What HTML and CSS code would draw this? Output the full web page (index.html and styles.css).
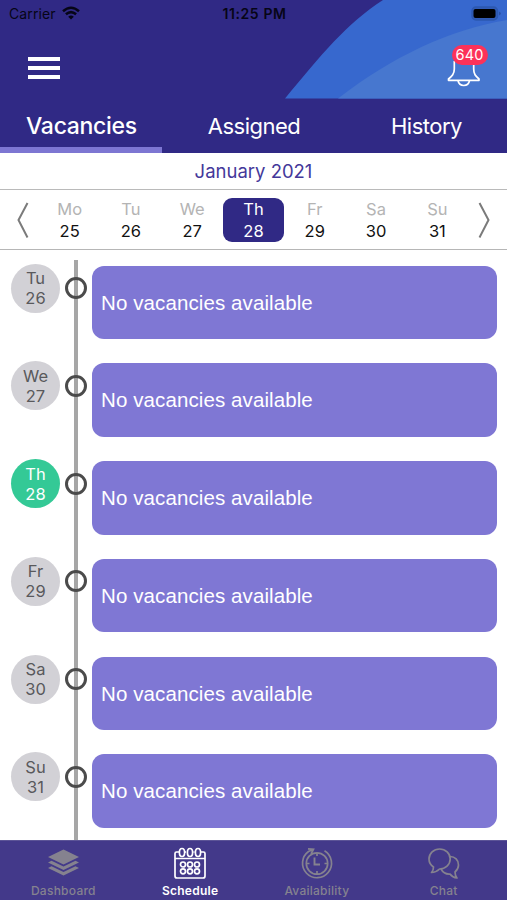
FILE: index.html
```html
<!DOCTYPE html>
<html lang="en">
<head>
<meta charset="utf-8">
<title>Schedule</title>
<link rel="stylesheet" href="styles.css">
</head>
<body>
<div class="app">
  <header class="header">
    <svg class="swoosh" width="222" height="99" viewBox="0 0 222 99" aria-hidden="true">
      <path d="M0 98.500C37 54 61 24 98 0H222V98.500Z" fill="#3768ce"/>
      <path d="M53 98.500C108 56 164 30 222 20V98.500Z" fill="#4777cf"/>
    </svg>
    <div class="status">
      <div class="carrier"><span>Carrier</span>
        <svg width="18" height="14" viewBox="0 0 18 14" fill="none" stroke="#060516" stroke-width="2.500"><path d="M1 5.200Q9-1.800 17 5.200M3.900 8.300Q9 3.900 14.100 8.300"/><path d="M6.200 10.700Q9 8.400 11.800 10.700L9 13.500Z" fill="#060516" stroke="none"/></svg>
      </div>
      <span class="time">11:25 PM</span>
      <svg class="battery" width="31" height="15" viewBox="0 0 31 15"><rect x="1" y="1" width="25.500" height="13" rx="4" fill="#315bb5" stroke="#2c58b0" stroke-width="1.500"/><rect x="2.500" y="3" width="22" height="9" rx="2" fill="#000"/><path d="M28.300 5.500Q31 7.500 28.300 9.500Z" fill="#244894"/></svg>
    </div>
    <div class="actions">
      <div class="menu"><i></i><i></i><i></i></div>
      <div class="bell">
        <svg width="34" height="40" viewBox="0 0 34 40" fill="none" stroke="#fff" stroke-width="1.700" stroke-linejoin="round"><path d="M7.300 14V22C7.300 27 5 29 1.500 32V33.300H32V32C28.500 29 26.700 27 26.700 22V14"/><path d="M11 33.500Q12 38.500 16.800 38.500T22.500 33.500"/></svg>
        <span class="badge">640</span>
      </div>
    </div>
  </header>
  <nav class="tabs">
    <div class="tab active"><span>Vacancies</span></div>
    <div class="tab"><span>Assigned</span></div>
    <div class="tab"><span>History</span></div>
  </nav>
  <div class="month"><span>January 2021</span></div>
  <div class="week">
    <svg class="arrow" width="39" height="58" viewBox="0 0 39 58"><path d="M27.500 12L18.500 29L27.500 46.500"/></svg>
    <div class="day"><span>Mo</span><b>25</b></div>
    <div class="day"><span>Tu</span><b>26</b></div>
    <div class="day"><span>We</span><b>27</b></div>
    <div class="day selected"><span>Th</span><b>28</b></div>
    <div class="day"><span>Fr</span><b>29</b></div>
    <div class="day"><span>Sa</span><b>30</b></div>
    <div class="day"><span>Su</span><b>31</b></div>
    <svg class="arrow" width="39" height="58" viewBox="0 0 39 58"><path d="M11.500 12L20.500 29L11.500 46.500"/></svg>
  </div>
  <main class="list">
    <div class="row"><div class="date"><span>Tu</span><span>26</span></div><i class="ring"></i><div class="card">No vacancies available</div></div>
    <div class="row"><div class="date"><span>We</span><span>27</span></div><i class="ring"></i><div class="card">No vacancies available</div></div>
    <div class="row"><div class="date today"><span>Th</span><span>28</span></div><i class="ring"></i><div class="card">No vacancies available</div></div>
    <div class="row"><div class="date"><span>Fr</span><span>29</span></div><i class="ring"></i><div class="card">No vacancies available</div></div>
    <div class="row"><div class="date"><span>Sa</span><span>30</span></div><i class="ring"></i><div class="card">No vacancies available</div></div>
    <div class="row"><div class="date"><span>Su</span><span>31</span></div><i class="ring"></i><div class="card">No vacancies available</div></div>
  </main>
  <footer class="bar">
    <div class="item">
      <svg width="34" height="34" viewBox="0 0 34 34" fill="#85828f"><path d="M17.500 2.500L33 10L17.500 17.500L2 10Z"/><path d="M2 15.500L5.500 13.700L17.500 19.500L29.500 13.700L33 15.500L17.500 23Z"/><path d="M2 21L5.500 19.200L17.500 25L29.500 19.200L33 21L17.500 28.500Z"/></svg>
      <span>Dashboard</span>
    </div>
    <div class="item on">
      <svg width="34" height="34" viewBox="0 0 34 34" fill="none" stroke="#fff" stroke-width="1.700"><path d="M6 5H3.500Q2 5 2 6.500V29Q2 31 4 31H30Q32 31 32 29V6.500Q32 5 30.500 5H28M2 11.500H32M12 5H13M20.500 5H21.500"/><ellipse cx="9" cy="5.500" rx="2.600" ry="4"/><ellipse cx="17" cy="5.500" rx="2.600" ry="4"/><ellipse cx="25" cy="5.500" rx="2.600" ry="4"/><circle cx="10" cy="17.500" r="2.500"/><circle cx="17" cy="17.500" r="2.500"/><circle cx="24" cy="17.500" r="2.500"/><circle cx="10" cy="24.300" r="2.500"/><circle cx="17" cy="24.300" r="2.500"/><circle cx="24" cy="24.300" r="2.500"/></svg>
      <span>Schedule</span>
    </div>
    <div class="item">
      <svg width="34" height="34" viewBox="0 0 34 34" fill="none" stroke="#85828f" stroke-width="1.700"><path d="M24.500 3.800A14.500 14.500 0 1 1 8.500 4.500L12.500 2.800M8 1.800L13.500 2.300L11 7"/><circle cx="17" cy="16.500" r="10.700"/><path d="M17 6V9M17 24V27M6.500 16.500H9.500M24.500 16.500H27.500"/><path d="M14.500 10.500V17.500H20" stroke-width="1.900"/></svg>
      <span>Availability</span>
    </div>
    <div class="item">
      <svg width="34" height="34" viewBox="0 0 34 34" fill="none" stroke="#85828f" stroke-width="1.700" stroke-linejoin="round"><path d="M6.500 20Q2 17 2 12A10.600 10 0 1 1 12.500 22Q9 25.500 4.500 25.500Q6.500 23.500 6.500 20Z"/><path d="M23 9.500C28 9.500 31.500 13 31.500 18Q31.500 22 28 25Q28 28.500 30 31Q25.500 30.500 23 27Q17 27.500 14 22"/></svg>
      <span>Chat</span>
    </div>
  </footer>
</div>
</body>
</html>
```
FILE: styles.css
```css
* { box-sizing: border-box; }
body { margin: 0; font-family: Inter, "Liberation Sans", sans-serif; background: #fff; }
.app { width: 507px; height: 900px; display: flex; flex-direction: column; overflow: hidden; }
svg { display: block; flex: none; }

.header { position: relative; height: 98.5px; flex: none; background: #302985; }
.swoosh { position: absolute; right: 0; top: 0; }
.status { position: relative; height: 28px; display: grid; grid-template-columns: 1fr auto 1fr; align-items: center; padding: 0 7px 0 9px; color: #060516; font-size: 14px; }
.carrier { display: flex; align-items: center; gap: 6px; letter-spacing: 0.1px; margin-top: -2px; }
.time { font-weight: 600; font-size: 14px; letter-spacing: 0.6px; margin-top: -1px; }
.battery { justify-self: end; margin: -2px -2px 0 0; }
.actions { position: relative; display: flex; justify-content: space-between; padding: 29px 26px 0 28px; }
.menu { display: grid; gap: 5px; align-content: start; }
.menu i { width: 32px; height: 4px; background: #fff; }
.bell { position: relative; width: 34px; margin-top: -10px; }
.badge { position: absolute; left: 4.500px; top: -2px; width: 36px; height: 19.500px; border-radius: 10px; background: #fc3259; color: #fff; font-size: 14.500px; line-height: 20px; text-align: center; letter-spacing: 0.2px; }

.tabs { display: grid; grid-template-columns: 162px 184px 1fr; height: 54px; flex: none; background: #302985; color: #fff; font-size: 22px; letter-spacing: -0.5px; }
.tab { display: flex; align-items: center; justify-content: center; padding-top: 1px; }
.tab.active { border-bottom: 6.500px solid #7d76d2; padding: 7px 0 0 1px; font-weight: 500; font-size: 23px; letter-spacing: -0.3px; }

.month { height: 37.500px; flex: none; border-bottom: 1.500px solid #bababa; display: flex; align-items: center; justify-content: center; font-size: 18.500px; color: #44389a; }
.week { height: 60px; flex: none; display: flex; align-items: center; border-bottom: 1.500px solid #b6b6b6; }
.arrow { fill: none; stroke: #7b7b7b; stroke-width: 2; }
.day { flex: 1; height: 44px; display: flex; flex-direction: column; align-items: center; border-radius: 9px; font-size: 16.500px; line-height: 22px; color: #b4b4b4; }
.day b { font-weight: 400; color: #111; }
.day.selected, .day.selected b { color: #fff; }
.day.selected { background: #302985; }

.list { flex: 1; min-height: 0; overflow: hidden; padding: 13.500px 10px 0 11px; background: linear-gradient(#a6a6a6, #a6a6a6) 74px 10px / 4px 100% no-repeat; }
.row { height: 97.800px; display: flex; align-items: flex-start; }
.date { width: 49px; height: 49px; border-radius: 50%; background: #d2d1d6; color: #59595c; font-size: 16.500px; line-height: 20px; padding-top: 4.500px; display: flex; flex-direction: column; align-items: center; }
.date.today { background: #34c996; color: #fff; }
.ring { width: 22px; height: 22px; border: 3px solid #4b4b4b; border-radius: 50%; margin: 13.500px 5px 0 4.500px; }
.card { flex: 1; height: 73.500px; margin-top: 2px; border-radius: 12px; background: #7f77d4; color: #fff; font: 20.500px "Liberation Sans", sans-serif; letter-spacing: 0.1px; line-height: 73.500px; padding-left: 9.500px; }

.bar { height: 60px; flex: none; background: #43398a; border-top: 1px solid #5c5497; display: grid; grid-template-columns: repeat(4, 1fr); color: #85828f; font-size: 12px; font-weight: 500; letter-spacing: 0.25px; }
.item { display: flex; flex-direction: column; align-items: center; padding-top: 6px; line-height: 18px; }
.item span { margin-top: 1px; }
.item.on { color: #fff; font-weight: 600; }
```
